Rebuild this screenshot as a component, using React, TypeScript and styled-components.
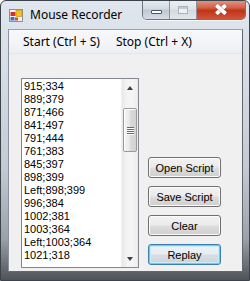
import React from "react";
import styled, { createGlobalStyle, css } from "styled-components";

const GlobalStyle = createGlobalStyle`
  html, body {
    margin: 0;
    padding: 0;
    background: #ffffff;
  }
  * {
    box-sizing: border-box;
  }
`;

const points = [
  "915;334",
  "889;379",
  "871;466",
  "841;497",
  "791;444",
  "761;383",
  "845;397",
  "898;399",
  "Left;898;399",
  "996;384",
  "1002;381",
  "1003;364",
  "Left;1003;364",
  "1021;318",
];

const actions = ["Open Script", "Save Script", "Clear", "Replay"];

export default function App() {
  return (
    <>
      <GlobalStyle />
      <Window>
        <TitleBar>
          <AppIcon />
          <Title>Mouse Recorder</Title>
          <CaptionButtons>
            <CaptionButton kind="min">
              <MinGlyph />
            </CaptionButton>
            <CaptionButton kind="max">
              <MaxGlyph />
            </CaptionButton>
            <CaptionButton kind="close">
              <CloseGlyph />
            </CaptionButton>
          </CaptionButtons>
        </TitleBar>
        <Client>
          <MenuStrip>
            <MenuItem>Start (Ctrl + S)</MenuItem>
            <MenuItem>Stop (Ctrl + X)</MenuItem>
          </MenuStrip>
          <Body>
            <ListBox>
              <Items>
                {points.map((p, i) => (
                  <Item key={i}>{p}</Item>
                ))}
              </Items>
              <ScrollBar>
                <ArrowButton>
                  <Arrow dir="up" />
                </ArrowButton>
                <Track>
                  <Thumb>
                    <Grip />
                    <Grip />
                    <Grip />
                    <Grip />
                  </Thumb>
                </Track>
                <ArrowButton>
                  <Arrow dir="down" />
                </ArrowButton>
              </ScrollBar>
            </ListBox>
            <ButtonColumn>
              {actions.map((a) => (
                <PushButton key={a} $default={a === "Replay"}>
                  {a}
                </PushButton>
              ))}
            </ButtonColumn>
          </Body>
        </Client>
      </Window>
    </>
  );
}

function AppIcon() {
  return (
    <IconBox>
      <svg width="14" height="13" viewBox="0 0 14 13">
        <rect x="0.5" y="0.5" width="13" height="12" fill="#f4f4f4" stroke="#8a8f99" />
        <rect x="1.5" y="3" width="5" height="4" fill="#d8322a" />
        <rect x="7" y="1.5" width="6" height="6" fill="#f2c21a" stroke="#c58d08" strokeWidth="0.6" />
        <rect x="1.5" y="8" width="4" height="3.5" fill="#3a6fd0" />
        <rect x="6" y="8.5" width="3" height="3" fill="#e04a3a" />
      </svg>
    </IconBox>
  );
}

const Window = styled.div`
  width: 250px;
  height: 281px;
  display: flex;
  flex-direction: column;
  border: 1px solid #3d434b;
  border-radius: 6px 6px 0 0;
  background: linear-gradient(
    to bottom,
    #dfe6ee 0%,
    #d6dde5 25%,
    #c3cad2 60%,
    #9ca2a9 85%,
    #4f5357 100%
  );
  font-family: "Liberation Sans", Arial, sans-serif;
  overflow: hidden;
`;

const TitleBar = styled.div`
  height: 27px;
  display: flex;
  align-items: flex-start;
  padding-left: 8px;
`;

const IconBox = styled.div`
  width: 14px;
  height: 13px;
  margin-top: 8px;
  display: flex;
`;

const Title = styled.div`
  margin-left: 7px;
  margin-top: 6px;
  font-family: "Noto Sans", "Open Sans", sans-serif;
  font-size: 12px;
  line-height: 16px;
  color: #000;
  flex: 1;
`;

const CaptionButtons = styled.div`
  display: flex;
  margin-right: 3px;
  margin-top: -1px;
  height: 20px;
  border: 1px solid #6b7480;
  border-top: none;
  border-radius: 0 0 5px 5px;
  overflow: hidden;
  box-shadow: 0 1px 0 rgba(255, 255, 255, 0.7);
`;

const CaptionButton = styled.div<{ kind: "min" | "max" | "close" }>`
  display: flex;
  align-items: center;
  justify-content: center;
  height: 100%;
  ${(p) =>
    p.kind === "min" &&
    css`
      width: 27px;
      background: linear-gradient(to bottom, #e9edf2 0%, #d3dae3 45%, #bfc8d3 55%, #d6dde6 100%);
      border-right: 1px solid #8a939e;
    `}
  ${(p) =>
    p.kind === "max" &&
    css`
      width: 27px;
      background: linear-gradient(to bottom, #edf0f3 0%, #e0e5ea 45%, #d3d9df 55%, #e2e6eb 100%);
      border-right: 1px solid #8a939e;
    `}
  ${(p) =>
    p.kind === "close" &&
    css`
      width: 48px;
      background: linear-gradient(to bottom, #e49a86 0%, #d3624a 40%, #bf3518 55%, #d0553a 100%);
    `}
`;

const MinGlyph = styled.div`
  width: 11px;
  height: 4px;
  margin-top: 5px;
  background: #ffffff;
  border: 1px solid #4a5563;
  border-radius: 1px;
`;

const MaxGlyph = styled.div`
  width: 10px;
  height: 8px;
  border: 1px solid #a9b1ba;
  background: #eef1f4;
  box-shadow: inset 0 2px 0 #c3cad2;
`;

const CloseGlyph = styled.div`
  position: relative;
  width: 14px;
  height: 11px;
  &::before,
  &::after {
    content: "";
    position: absolute;
    left: 5px;
    top: -1px;
    width: 4px;
    height: 13px;
    background: #ffffff;
    border-radius: 1px;
    box-shadow: 0 0 1px #6b1d0f;
  }
  &::before {
    transform: rotate(48deg);
  }
  &::after {
    transform: rotate(-48deg);
  }
`;

const Client = styled.div`
  flex: 1;
  margin: 1px 6px 8px 7px;
  display: flex;
  flex-direction: column;
  background: #f0f0f0;
  border: 1px solid #5f6872;
  border-top-color: #9aa3ad;
  border-left-color: #8a939c;
`;

const MenuStrip = styled.div`
  height: 24px;
  display: flex;
  align-items: center;
  padding-left: 7px;
  background: linear-gradient(to bottom, #f6f8fa 0%, #f2f4f7 60%, #eceff2 100%);
  border-bottom: 1px solid #e4e7ea;
`;

const MenuItem = styled.div`
  padding: 0 7px;
  font-family: "Noto Sans", "Open Sans", sans-serif;
  font-size: 12px;
  line-height: 16px;
  color: #000;
  margin-right: 2px;
`;

const Body = styled.div`
  flex: 1;
  display: flex;
  align-items: flex-end;
  padding: 0 0 3px 12px;
`;

const ListBox = styled.div`
  width: 118px;
  height: 190px;
  border: 1px solid #828790;
  background: #ffffff;
  display: flex;
  overflow: hidden;
`;

const Items = styled.div`
  flex: 1;
  padding: 1px 0 0 2px;
  overflow: hidden;
`;

const Item = styled.div`
  font-size: 11px;
  line-height: 13px;
  height: 13px;
  color: #000;
  white-space: nowrap;
`;

const ScrollBar = styled.div`
  width: 17px;
  display: flex;
  flex-direction: column;
  background: linear-gradient(to right, #e8e8e8 0%, #f4f4f4 30%, #f4f4f4 70%, #ebebeb 100%);
  border-left: 1px solid #f0f0f0;
`;

const ArrowButton = styled.div`
  height: 17px;
  display: flex;
  align-items: center;
  justify-content: center;
`;

const Arrow = styled.div<{ dir: "up" | "down" }>`
  width: 0;
  height: 0;
  border-left: 3.5px solid transparent;
  border-right: 3.5px solid transparent;
  ${(p) =>
    p.dir === "up"
      ? css`
          border-bottom: 4px solid #404040;
        `
      : css`
          border-top: 4px solid #404040;
        `}
`;

const Track = styled.div`
  flex: 1;
  padding: 12px 1px 0 1px;
`;

const Thumb = styled.div`
  height: 44px;
  border: 1px solid #9a9a9a;
  border-radius: 2px;
  background: linear-gradient(to right, #f5f5f5 0%, #e8e8e8 45%, #d9d9d9 55%, #d2d2d2 100%);
  box-shadow: inset 1px 1px 0 #ffffff;
  display: flex;
  flex-direction: column;
  align-items: center;
  justify-content: center;
  gap: 1px;
`;

const Grip = styled.div`
  width: 7px;
  height: 1px;
  background: #6a6a6a;
  box-shadow: 0 1px 0 #ffffff;
`;

const ButtonColumn = styled.div`
  display: flex;
  flex-direction: column;
  gap: 8px;
  margin-left: 9px;
  padding-bottom: 3px;
`;

const PushButton = styled.div<{ $default?: boolean }>`
  width: 73px;
  height: 21px;
  display: flex;
  align-items: center;
  justify-content: center;
  font-size: 11px;
  color: #000;
  border-radius: 3px;
  border: 1px solid #707070;
  background: linear-gradient(to bottom, #f2f2f2 0%, #ebebeb 48%, #dddddd 52%, #cfcfcf 100%);
  box-shadow: inset 0 0 0 1px #fcfcfc;
  ${(p) =>
    p.$default &&
    css`
      border-color: #3c7fb1;
      background: linear-gradient(to bottom, #eef3f6 0%, #e6ecf0 48%, #d8dfe4 52%, #cbd3d9 100%);
      box-shadow: inset 0 0 0 1px #5fd1f7, inset 0 0 0 2px #c9ecf8;
    `}
`;
